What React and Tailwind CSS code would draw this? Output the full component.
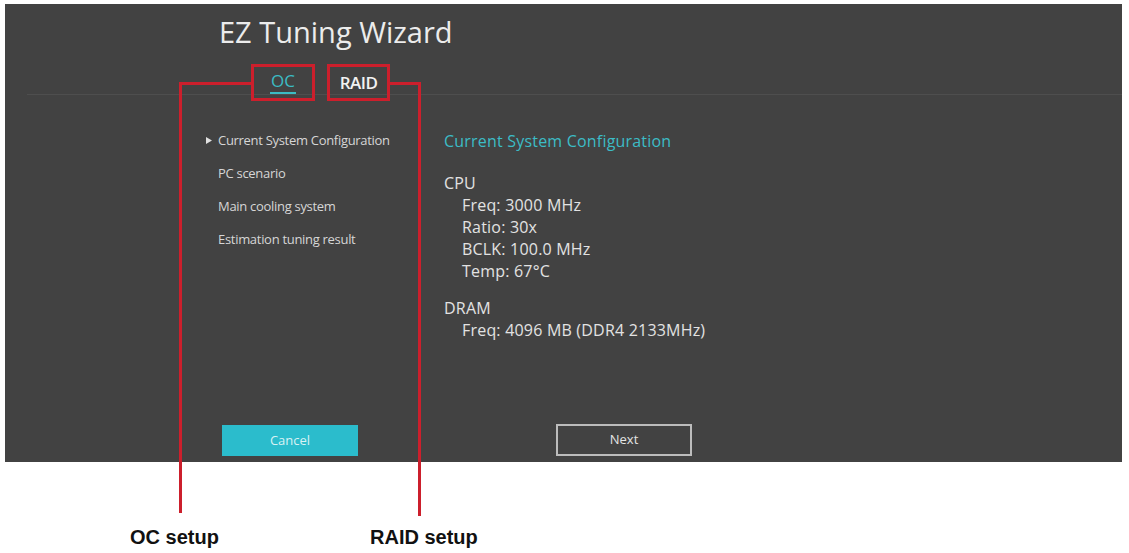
import React from "react";

const menu = [
  "Current System Configuration",
  "PC scenario",
  "Main cooling system",
  "Estimation tuning result",
];

const cpu = ["Freq: 3000 MHz", "Ratio: 30x", "BCLK: 100.0 MHz", "Temp: 67°C"];

export default function App() {
  return (
    <div className="relative w-[1129px] h-[553px] overflow-hidden bg-white">
      {/* BIOS screen */}
      <div className="ml-[5px] mr-[7px] mt-[4px] h-[458px] bg-[#424242] flex flex-col font-['Open_Sans',sans-serif]">
        <h1 className="pl-[214px] pt-[11px] text-[29px] leading-[34px] text-[#ececec]">
          EZ Tuning Wizard
        </h1>

        <div className="mt-[15px] ml-[22px] h-[31px] flex gap-[12px] pl-[224px] border-b border-[#4e4e4e]">
          <div className="relative z-10 -mb-[7px] w-[64px] h-[37px] border-[3px] border-[#cc1f2c] flex justify-center pt-[3px]">
            <span className="text-[17px] leading-[22px] text-[#3bbcc4] border-b-[2px] border-[#3bbcc4] h-[24px] px-[1px]">
              OC
            </span>
          </div>
          <div className="relative z-10 -mb-[7px] w-[63px] h-[37px] border-[3px] border-[#cc1f2c] flex items-center justify-center">
            <span className="text-[17px] font-semibold leading-[22px] text-[#f2f2f2] tracking-[-0.5px]">
              RAID
            </span>
          </div>
        </div>

        <div className="flex-1 flex pt-[29px]">
          <ul className="w-[439px] pl-[201px]">
            {menu.map((m, i) => (
              <li key={m} className="h-[33px] flex items-center text-[13px] text-[#d6d6d6] tracking-[-0.3px]">
                <span className="w-[12px] flex">
                  {i === 0 && (
                    <svg width="6" height="7" viewBox="0 0 6 7">
                      <path d="M0 0 L6 3.5 L0 7 Z" fill="#e0e0e0" />
                    </svg>
                  )}
                </span>
                {m}
              </li>
            ))}
          </ul>
          <div className="flex flex-col text-[16px] leading-[22px] text-[#e2e2e2] tracking-[0.2px]">
            <h2 className="h-[33px] flex items-center text-[16px] text-[#3cbcc6]">
              Current System Configuration
            </h2>
            <p className="mt-[15px]">CPU</p>
            {cpu.map((c) => (
              <p key={c} className="pl-[18px]">{c}</p>
            ))}
            <p className="mt-[15px]">DRAM</p>
            <p className="pl-[18px]">Freq: 4096 MB (DDR4 2133MHz)</p>
          </div>
        </div>

        <div className="flex items-end pl-[217px] pb-[6px] gap-[198px]">
          <button className="w-[136px] h-[31px] bg-[#2bbccc] text-[13px] text-[#d9f2f4]">
            Cancel
          </button>
          <button className="w-[136px] h-[32px] border-2 border-[#bcbcbc] text-[13px] text-[#e4e4e4]">
            Next
          </button>
        </div>
      </div>

      {/* labels */}
      <div className="flex mt-[63px] pl-[130px] font-['Liberation_Sans',Arial,sans-serif] font-bold text-[20px] leading-[24px] text-[#111]">
        <span className="w-[240px]">OC setup</span>
        <span>RAID setup</span>
      </div>

      {/* annotation lines */}
      <div className="absolute left-[179px] top-[82px] w-[72px] h-[3px] bg-[#cc1f2c]" />
      <div className="absolute left-[179px] top-[82px] w-[3px] h-[431px] bg-[#cc1f2c]" />
      <div className="absolute left-[390px] top-[82px] w-[31px] h-[3px] bg-[#cc1f2c]" />
      <div className="absolute left-[418px] top-[82px] w-[3px] h-[434px] bg-[#cc1f2c]" />
    </div>
  );
}
